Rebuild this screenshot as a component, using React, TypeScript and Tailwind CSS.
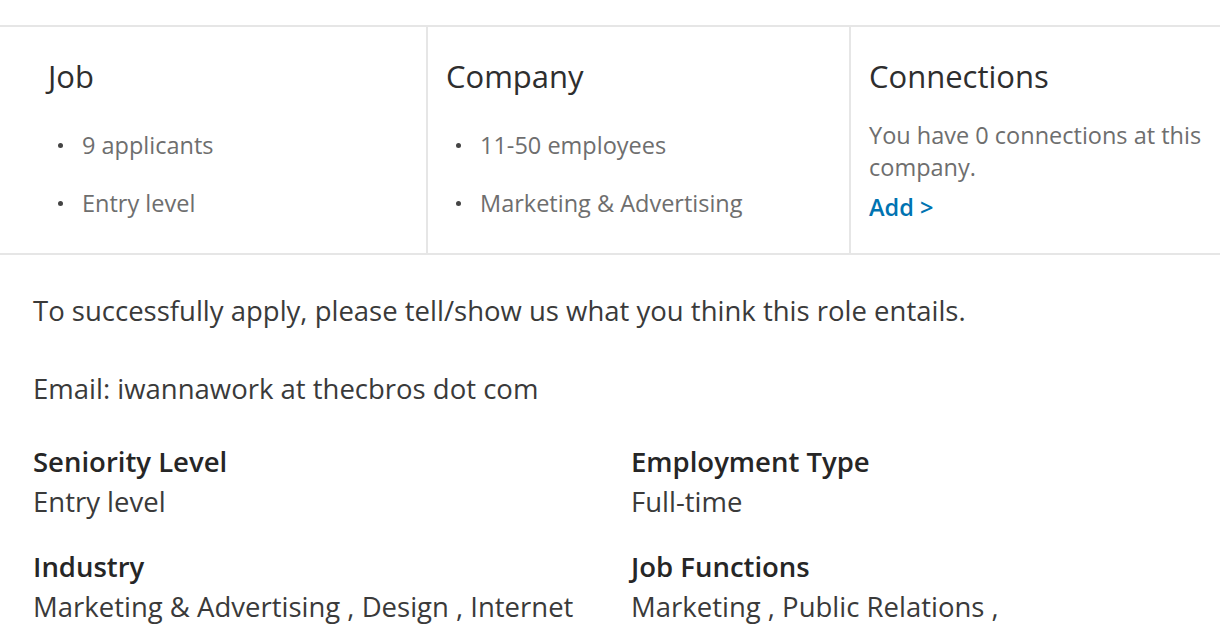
import React from "react";

const font = { fontFamily: '"Open Sans", "Noto Sans", Arial, sans-serif' };

type Summary = { title: string; items?: string[] };

function Bullets({ items }: { items: string[] }) {
  return (
    <ul className="mt-[33px] flex flex-col gap-[26px]">
      {items.map(t => (
        <li key={t} className="flex items-center h-[32px] text-[23.5px] leading-[32px] text-[#6e6e6e]">
          <span className="ml-[10px] mr-[19px] w-[5px] h-[5px] rounded-full bg-[#444] shrink-0" />
          {t}
        </li>
      ))}
    </ul>
  );
}

function Detail({ label, value }: { label: string; value: string }) {
  return (
    <div>
      <p className="text-[27.5px] leading-[40px] font-semibold text-[#262626]">{label}</p>
      <p className="text-[27.5px] leading-[40px] text-[#3a3a3a]">{value}</p>
    </div>
  );
}

export default function App() {
  const cols: Summary[] = [
    { title: "Job", items: ["9 applicants", "Entry level"] },
    { title: "Company", items: ["11-50 employees", "Marketing & Advertising"] },
  ];

  return (
    <div className="w-[1220px] h-[640px] overflow-hidden bg-white" style={font}>
      {/* summary strip */}
      <div className="mt-[25px] w-[1272px] h-[230px] border-y-2 border-[#e6e6e6] grid grid-cols-[428px_423px_1fr]">
        {cols.map((c, i) => (
          <div
            key={c.title}
            className={`border-r-2 border-[#e6e6e6] pt-[29px] ${i === 0 ? "pl-[48px]" : "pl-[18px]"}`}
          >
            <h3 className="text-[31px] leading-[40px] text-[#2e2e2e]">{c.title}</h3>
            <Bullets items={c.items || []} />
          </div>
        ))}
        <div className="pt-[29px] pl-[18px] pr-[18px]">
          <h3 className="text-[31px] leading-[40px] text-[#2e2e2e]">Connections</h3>
          <p className="mt-[23px] w-[370px] text-[23.5px] leading-[32px] text-[#6e6e6e]">
            You have 0 connections at this company.
          </p>
          <a className="mt-[8px] block text-[23.5px] leading-[32px] font-semibold text-[#0073b1]">
            Add &gt;
          </a>
        </div>
      </div>

      {/* description */}
      <div className="pl-[33px] pt-[38px]">
        <p className="text-[27.5px] leading-[36px] text-[#3a3a3a]">
          To successfully apply, please tell/show us what you think this role entails.
        </p>
        <p className="mt-[42px] text-[27.5px] leading-[36px] text-[#3a3a3a]">
          Email: iwannawork at thecbros dot com
        </p>
        <div className="mt-[35px] grid grid-cols-[598px_1fr] gap-y-[25px]">
          <Detail label="Seniority Level" value="Entry level" />
          <Detail label="Employment Type" value="Full-time" />
          <Detail label="Industry" value="Marketing & Advertising , Design , Internet" />
          <Detail label="Job Functions" value="Marketing , Public Relations ," />
        </div>
      </div>
    </div>
  );
}
